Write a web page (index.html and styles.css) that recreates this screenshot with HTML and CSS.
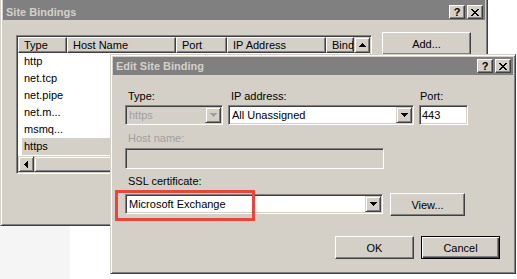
FILE: index.html
```html
<!DOCTYPE html>
<html lang="en">
<head>
    <meta charset="UTF-8">
    <meta name="viewport" content="width=device-width, initial-scale=1.0">
    <title>Site Bindings</title>
    <link rel="stylesheet" href="styles.css">
</head>
<body>
    <div class="desktop">
        <div class="desk-patch"></div>

        <!-- back window: list of bindings -->
        <div class="window back-win">
            <div class="titlebar">
                <span class="title">Site Bindings</span>
                <div class="caption-btns">
                    <span class="cap-btn">?</span>
                    <span class="cap-btn"><svg width="8" height="7" viewBox="0 0 8 7"><path d="M0 0h2v1H0zM6 0h2v1H6zM1 1h2v1H1zM5 1h2v1H5zM2 2h4v1H2zM3 3h2v1H3zM2 4h4v1H2zM1 5h2v1H1zM5 5h2v1H5zM0 6h2v1H0zM6 6h2v1H6z"/></svg></span>
                </div>
            </div>
            <div class="bindings-body">
                <div class="listview">
                    <div class="lv-main">
                        <div class="lv-header">
                            <span class="lv-col col-type">Type</span>
                            <span class="lv-col col-host">Host Name</span>
                            <span class="lv-col col-port">Port</span>
                            <span class="lv-col col-ip">IP Address</span>
                            <span class="lv-col col-bind">Bind</span>
                        </div>
                        <div class="lv-rows">
                            <div class="lv-row">http</div>
                            <div class="lv-row">net.tcp</div>
                            <div class="lv-row">net.pipe</div>
                            <div class="lv-row">net.m...</div>
                            <div class="lv-row">msmq...</div>
                            <div class="lv-row selected">https</div>
                        </div>
                        <div class="hscroll">
                            <span class="sb-btn"><svg width="4" height="7" viewBox="0 0 4 7"><path d="M3 0h1v7H3zM2 1h1v5H2zM1 2h1v3H1zM0 3h1v1H0z"/></svg></span>
                            <span class="sb-thumb"></span>
                            <span class="sb-track"></span>
                        </div>
                    </div>
                    <div class="vscroll">
                        <span class="sb-btn"><svg width="7" height="4" viewBox="0 0 7 4"><path d="M3 0h1v1H3zM2 1h3v1H2zM1 2h5v1H1zM0 3h7v1H0z"/></svg></span>
                        <span class="sb-track"></span>
                    </div>
                </div>
                <div class="side-btns">
                    <button class="btn add-btn">Add...</button>
                </div>
            </div>
        </div>

        <!-- front window: edit dialog -->
        <div class="window edit-win">
            <div class="titlebar">
                <span class="title">Edit Site Binding</span>
                <div class="caption-btns">
                    <span class="cap-btn">?</span>
                    <span class="cap-btn"><svg width="8" height="7" viewBox="0 0 8 7"><path d="M0 0h2v1H0zM6 0h2v1H6zM1 1h2v1H1zM5 1h2v1H5zM2 2h4v1H2zM3 3h2v1H3zM2 4h4v1H2zM1 5h2v1H1zM5 5h2v1H5zM0 6h2v1H0zM6 6h2v1H6z"/></svg></span>
                </div>
            </div>
            <div class="edit-body">
                <div class="field-grid">
                    <span class="lbl">Type:</span>
                    <span class="lbl">IP address:</span>
                    <span class="lbl port-lbl">Port:</span>
                    <div class="combo disabled">
                        <span class="combo-text">https</span>
                        <span class="drop-btn"><svg width="7" height="4" viewBox="0 0 7 4"><path d="M0 0h7v1H0zM1 1h5v1H1zM2 2h3v1H2zM3 3h1v1H3z"/></svg></span>
                    </div>
                    <div class="combo">
                        <span class="combo-text">All Unassigned</span>
                        <span class="drop-btn"><svg width="7" height="4" viewBox="0 0 7 4"><path d="M0 0h7v1H0zM1 1h5v1H1zM2 2h3v1H2zM3 3h1v1H3z"/></svg></span>
                    </div>
                    <div class="textbox">443</div>
                </div>
                <div class="lbl host-lbl">Host name:</div>
                <div class="textbox host-box"></div>
                <div class="lbl ssl-lbl">SSL certificate:</div>
                <div class="ssl-row">
                    <div class="combo ssl-combo">
                        <span class="combo-text">Microsoft Exchange</span>
                        <span class="drop-btn"><svg width="7" height="4" viewBox="0 0 7 4"><path d="M0 0h7v1H0zM1 1h5v1H1zM2 2h3v1H2zM3 3h1v1H3z"/></svg></span>
                    </div>
                    <button class="btn view-btn">View...</button>
                </div>
                <div class="dialog-btns">
                    <button class="btn">OK</button>
                    <button class="btn default">Cancel</button>
                </div>
            </div>
            <div class="highlight"></div>
        </div>
    </div>
</body>
</html>
```

FILE: styles.css
```css
* {
    box-sizing: border-box;
}
body {
    margin: 0;
    background-color: #fff;
    font-family: "Liberation Sans", Arial, sans-serif;
    font-size: 11px;
    line-height: 13px;
    color: #000;
    overflow: hidden;
}
.desktop {
    position: relative;
    width: 517px;
    height: 279px;
    overflow: hidden;
}
.desk-patch {
    position: absolute;
    left: 0;
    top: 226px;
    width: 70px;
    height: 53px;
    background-color: #f5f5f5;
}

/* classic window frame */
.window {
    position: absolute;
    display: flex;
    flex-direction: column;
    background-color: #d4d0c8;
    border: 1px solid;
    border-color: #d4d0c8 #404040 #404040 #d4d0c8;
    box-shadow: inset 1px 1px #fff, inset -1px -1px #808080;
    padding: 2px;
}
.back-win {
    left: 0;
    top: -3px;
    width: 488px;
    height: 229px;
}
.edit-win {
    left: 110px;
    top: 54px;
    width: 406px;
    height: 220px;
}
.titlebar {
    flex-shrink: 0;
    height: 18px;
    display: flex;
    align-items: center;
    justify-content: space-between;
    padding: 0 2px 0 3px;
    background-color: #808080;
    color: #d4d0c8;
    font-weight: bold;
}
.back-win .titlebar {
    height: 20px;
    align-items: flex-end;
    padding-bottom: 1px;
}
.caption-btns {
    display: flex;
    gap: 2px;
}
.cap-btn {
    width: 16px;
    height: 14px;
    display: flex;
    align-items: center;
    justify-content: center;
    background-color: #d4d0c8;
    border: 1px solid;
    border-color: #fff #404040 #404040 #fff;
    box-shadow: inset -1px -1px #808080;
    color: #000;
    font-weight: bold;
    font-size: 11px;
}

/* bevels */
.btn {
    height: 23px;
    padding: 0;
    font-family: inherit;
    font-size: 11px;
    color: #000;
    background-color: #d4d0c8;
    border: 1px solid;
    border-color: #fff #404040 #404040 #fff;
    box-shadow: inset -1px -1px #808080;
}
.btn.default {
    border-color: #000;
    box-shadow: inset 1px 1px #fff, inset -1px -1px #404040, inset -2px -2px #808080;
}
.combo, .textbox, .listview {
    border: 1px solid;
    border-color: #808080 #fff #fff #808080;
    box-shadow: inset 1px 1px #404040, inset -1px -1px #d4d0c8;
    padding: 1px;
    background-color: #fff;
}

/* site bindings list */
.bindings-body {
    display: flex;
    align-items: flex-start;
    padding: 12px 0 0 13px;
}
.listview {
    margin-top: 3px;
    width: 356px;
    height: 139px;
    display: flex;
}
.lv-main {
    flex: 1;
    display: flex;
    flex-direction: column;
    min-width: 0;
}
.lv-header {
    display: flex;
    height: 16px;
    flex-shrink: 0;
}
.lv-col {
    height: 16px;
    padding-left: 5px;
    line-height: 14px;
    background-color: #d4d0c8;
    border: 1px solid;
    border-color: #fff #404040 #404040 #fff;
    box-shadow: inset -1px -1px #808080;
    white-space: nowrap;
    overflow: hidden;
}
.col-type { width: 49px; }
.col-host { width: 109px; }
.col-port { width: 51px; }
.col-ip { width: 99px; }
.col-bind { flex: 1; }
.lv-rows {
    flex: 1;
}
.lv-row {
    height: 17px;
    line-height: 17px;
    margin-left: 4px;
    padding-left: 2px;
}
.lv-row.selected {
    background-color: #d4d0c8;
}
.hscroll {
    height: 16px;
    display: flex;
    flex-shrink: 0;
    background-color: #ece9e4;
}
.sb-btn {
    width: 16px;
    height: 16px;
    flex-shrink: 0;
    display: flex;
    align-items: center;
    justify-content: center;
    background-color: #d4d0c8;
    border: 1px solid;
    border-color: #d4d0c8 #404040 #404040 #d4d0c8;
    box-shadow: inset 1px 1px #fff, inset -1px -1px #808080;
}
.sb-thumb {
    width: 220px;
    height: 16px;
    background-color: #d4d0c8;
    border: 1px solid;
    border-color: #d4d0c8 #404040 #404040 #d4d0c8;
    box-shadow: inset 1px 1px #fff, inset -1px -1px #808080;
}
.sb-track {
    flex: 1;
}
.vscroll {
    width: 16px;
    display: flex;
    flex-direction: column;
    background-color: #ece9e4;
}
.side-btns {
    margin-left: 10px;
}
.add-btn {
    width: 89px;
}

/* edit binding dialog */
.edit-body {
    padding: 15px 0 0 12px;
    display: flex;
    flex-direction: column;
    align-items: flex-start;
}
.field-grid {
    display: grid;
    grid-template-columns: 98px 186px 49px;
    column-gap: 5px;
    row-gap: 2px;
}
.lbl {
    height: 13px;
    padding-left: 3px;
    white-space: nowrap;
}
.port-lbl {
    padding-left: 1px;
}
.combo {
    height: 20px;
    display: flex;
    align-items: center;
}
.combo-text {
    flex: 1;
    padding-left: 2px;
    white-space: nowrap;
    overflow: hidden;
}
.drop-btn {
    width: 16px;
    height: 16px;
    display: flex;
    align-items: center;
    justify-content: center;
    background-color: #d4d0c8;
    border: 1px solid;
    border-color: #d4d0c8 #404040 #404040 #d4d0c8;
    box-shadow: inset 1px 1px #fff, inset -1px -1px #808080;
}
.combo.disabled {
    background-color: #d4d0c8;
    color: #a0a0a0;
}
.combo.disabled svg {
    fill: #a0a0a0;
}
.textbox {
    height: 20px;
    padding-left: 2px;
    line-height: 16px;
}
.host-lbl {
    margin-top: 7px;
    color: #a0a0a0;
}
.host-box {
    margin-top: 3px;
    width: 259px;
    height: 21px;
    background-color: #d4d0c8;
}
.ssl-lbl {
    margin-top: 6px;
}
.ssl-row {
    margin-top: 5px;
    display: flex;
    align-items: flex-start;
    gap: 7px;
}
.ssl-combo {
    margin-top: 1px;
    width: 258px;
}
.view-btn {
    width: 75px;
}
.dialog-btns {
    margin-top: 20px;
    align-self: flex-end;
    margin-right: 13px;
    display: flex;
    gap: 7px;
}
.dialog-btns .btn {
    width: 79px;
}
.highlight {
    position: absolute;
    left: 4px;
    top: 135px;
    width: 140px;
    height: 31px;
    border: 3px solid #e8453c;
}
```
